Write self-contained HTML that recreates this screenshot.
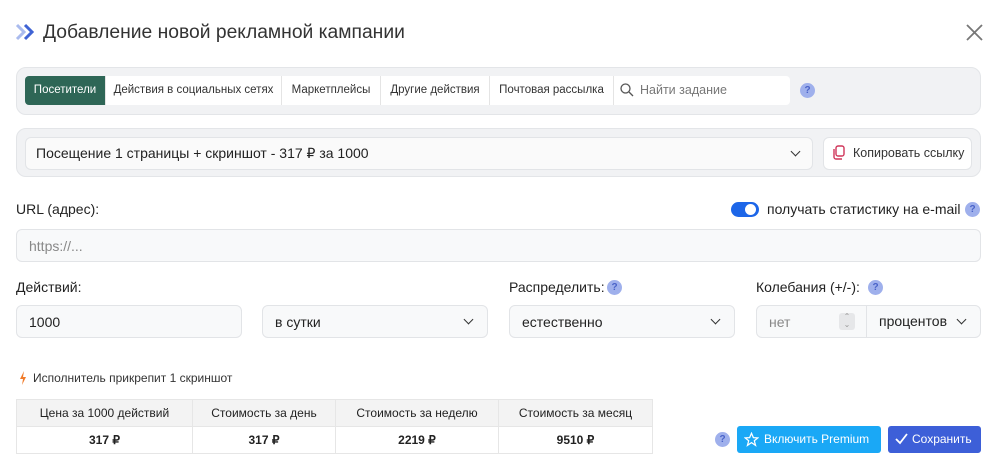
<!DOCTYPE html>
<html><head><meta charset="utf-8"><style>
*{box-sizing:border-box;margin:0;padding:0}
body{width:1000px;height:472px;background:#fff;font-family:"Liberation Sans","Noto Sans CJK SC",sans-serif;color:#222;position:relative;overflow:hidden}
.a{position:absolute}
.panel{background:#f1f2f4;border:1px solid #e3e5e8;border-radius:10px}
.tab{position:absolute;top:76px;height:29px;background:#fff;border-right:1px solid #e4e4e4;font-size:11.5px;line-height:29px;text-align:center;color:#333;white-space:nowrap}
.inp{position:absolute;background:#f8f9fa;border:1px solid #e2e4e7;border-radius:6px;font-size:14px;line-height:32px;padding-left:12px;color:#222}
.q{position:absolute;width:15px;height:15px;border-radius:50%;background:#9fb0ec;color:#4a63c8;font-size:10px;font-weight:bold;text-align:center;line-height:15px}
.chev{position:absolute;width:7px;height:7px;border-right:1.6px solid #333;border-bottom:1.6px solid #333;transform:rotate(45deg)}
.lbl{position:absolute;font-size:14px;color:#222}
table{border-collapse:collapse;font-size:12px}
td{border:1px solid #e6e6e6;text-align:center;height:27px}
</style></head><body>
<svg class="a" style="left:15px;top:23px" width="22" height="18" viewBox="0 0 22 18"><path d="M2 2l7 7-7 7" stroke="#aabbee" stroke-width="3" fill="none"/><path d="M10 2l7 7-7 7" stroke="#3f63d4" stroke-width="3" fill="none"/></svg>
<div class="a" style="left:43px;top:22px;font-size:19.3px;color:#333">Добавление новой рекламной кампании</div>
<svg class="a" style="left:966px;top:24px" width="17" height="17"><path d="M1 1L16 16M16 1L1 16" stroke="#777" stroke-width="1.8"/></svg>

<div class="a panel" style="left:16px;top:67px;width:965px;height:48px"></div>
<div class="tab" style="left:25px;width:81px;background:#2e6656;color:#fff;border-radius:4px 0 0 4px">Посетители</div>
<div class="tab" style="left:106px;width:176px">Действия в социальных сетях</div>
<div class="tab" style="left:282px;width:99px">Маркетплейсы</div>
<div class="tab" style="left:381px;width:109px">Другие действия</div>
<div class="tab" style="left:490px;width:124px">Почтовая рассылка</div>
<div class="tab" style="left:614px;width:176px;text-align:left;padding-left:26px;color:#777;font-size:12.5px;border-radius:0 4px 4px 0;border-right:none">Найти задание</div>
<svg class="a" style="left:620px;top:83px" width="14" height="14"><circle cx="5.5" cy="5.5" r="4.5" stroke="#555" stroke-width="1.3" fill="none"/><path d="M9 9l4 4" stroke="#555" stroke-width="1.3"/></svg>
<div class="q" style="left:800px;top:83px">?</div>

<div class="a panel" style="left:16px;top:128px;width:965px;height:49px"></div>
<div class="inp" style="left:25px;top:137px;width:788px;height:33px;background:#fafafa;line-height:31px;font-size:14px;padding-left:10px">Посещение 1 страницы + скриншот - 317 ₽ за 1000</div>
<div class="chev" style="left:792px;top:148px"></div>
<div class="a" style="left:823px;top:137px;width:149px;height:33px;background:#fff;border:1px solid #e2e4e7;border-radius:6px;font-size:12.5px;line-height:31px;padding-left:29px;color:#333;white-space:nowrap">Копировать ссылку</div>
<svg class="a" style="left:832px;top:145px" width="14" height="16"><rect x="4" y="1" width="8" height="10" rx="2" stroke="#d0365a" stroke-width="1.4" fill="none"/><path d="M2 4v8a2 2 0 0 0 2 2h6" stroke="#d0365a" stroke-width="1.4" fill="none"/></svg>

<div class="lbl" style="left:16px;top:201px">URL (адрес):</div>
<div class="a" style="left:731px;top:202px;width:28px;height:15px;border-radius:8px;background:#1d66e8"></div>
<div class="a" style="left:745px;top:204px;width:11px;height:11px;border-radius:50%;background:#fff"></div>
<div class="lbl" style="left:767px;top:201px">получать статистику на e-mail</div>
<div class="q" style="left:965px;top:202px">?</div>
<div class="inp" style="left:16px;top:229px;width:965px;height:33px;color:#888">https://...</div>

<div class="lbl" style="left:16px;top:279px">Действий:</div>
<div class="lbl" style="left:509px;top:279px">Распределить:</div>
<div class="q" style="left:607px;top:280px">?</div>
<div class="lbl" style="left:756px;top:279px">Колебания (+/-):</div>
<div class="q" style="left:868px;top:280px">?</div>

<div class="inp" style="left:16px;top:305px;width:226px;height:33px">1000</div>
<div class="inp" style="left:262px;top:305px;width:226px;height:33px">в сутки</div>
<div class="chev" style="left:465px;top:316px"></div>
<div class="inp" style="left:509px;top:305px;width:226px;height:33px">естественно</div>
<div class="chev" style="left:712px;top:316px"></div>
<div class="inp" style="left:756px;top:305px;width:225px;height:33px;color:#888;border-radius:6px">нет</div>
<div class="a" style="left:839px;top:313px;width:16px;height:17px;background:#e6e7e9;border-radius:3px;color:#999;font-size:8px;text-align:center;line-height:8px">⌃<br>⌄</div>
<div class="a" style="left:866px;top:306px;width:114px;height:31px;border-left:1px solid #e2e4e7;font-size:14px;line-height:31px;padding-left:12px">процентов</div>
<div class="chev" style="left:958px;top:316px"></div>

<svg class="a" style="left:19px;top:371px" width="8" height="14"><path d="M5 0L1 8h3l-1 6 4-8H4z" fill="#f07b2a"/></svg>
<div class="a" style="left:33px;top:371px;font-size:12px;color:#333">Исполнитель прикрепит 1 скриншот</div>

<table class="a" style="left:16px;top:399px;width:637px">
<tr style="background:#f3f3f3"><td style="width:176px">Цена за 1000 действий</td><td style="width:143px">Стоимость за день</td><td style="width:163px">Стоимость за неделю</td><td>Стоимость за месяц</td></tr>
<tr style="font-weight:bold"><td>317 ₽</td><td>317 ₽</td><td>2219 ₽</td><td>9510 ₽</td></tr>
</table>

<div class="q" style="left:715px;top:432px">?</div>
<div class="a" style="left:737px;top:426px;width:144px;height:27px;background:#1aa8f6;border-radius:3px;color:#fff;font-size:12px;line-height:27px;padding-left:27px">Включить Premium</div>
<svg class="a" style="left:744px;top:432px" width="15" height="15" viewBox="0 0 24 24"><path d="M12 2l3 7 7 .5-5.5 4.5 2 7.5L12 17l-6.5 4.5 2-7.5L2 9.5 9 9z" stroke="#fff" stroke-width="2" fill="none"/></svg>
<div class="a" style="left:888px;top:426px;width:93px;height:27px;background:#3d5fd8;border-radius:3px;color:#fff;font-size:12px;line-height:27px;padding-left:24px">Сохранить</div>
<svg class="a" style="left:895px;top:433px" width="13" height="12"><path d="M1 6l4 4 7-9" stroke="#fff" stroke-width="1.8" fill="none"/></svg>
</body></html>
